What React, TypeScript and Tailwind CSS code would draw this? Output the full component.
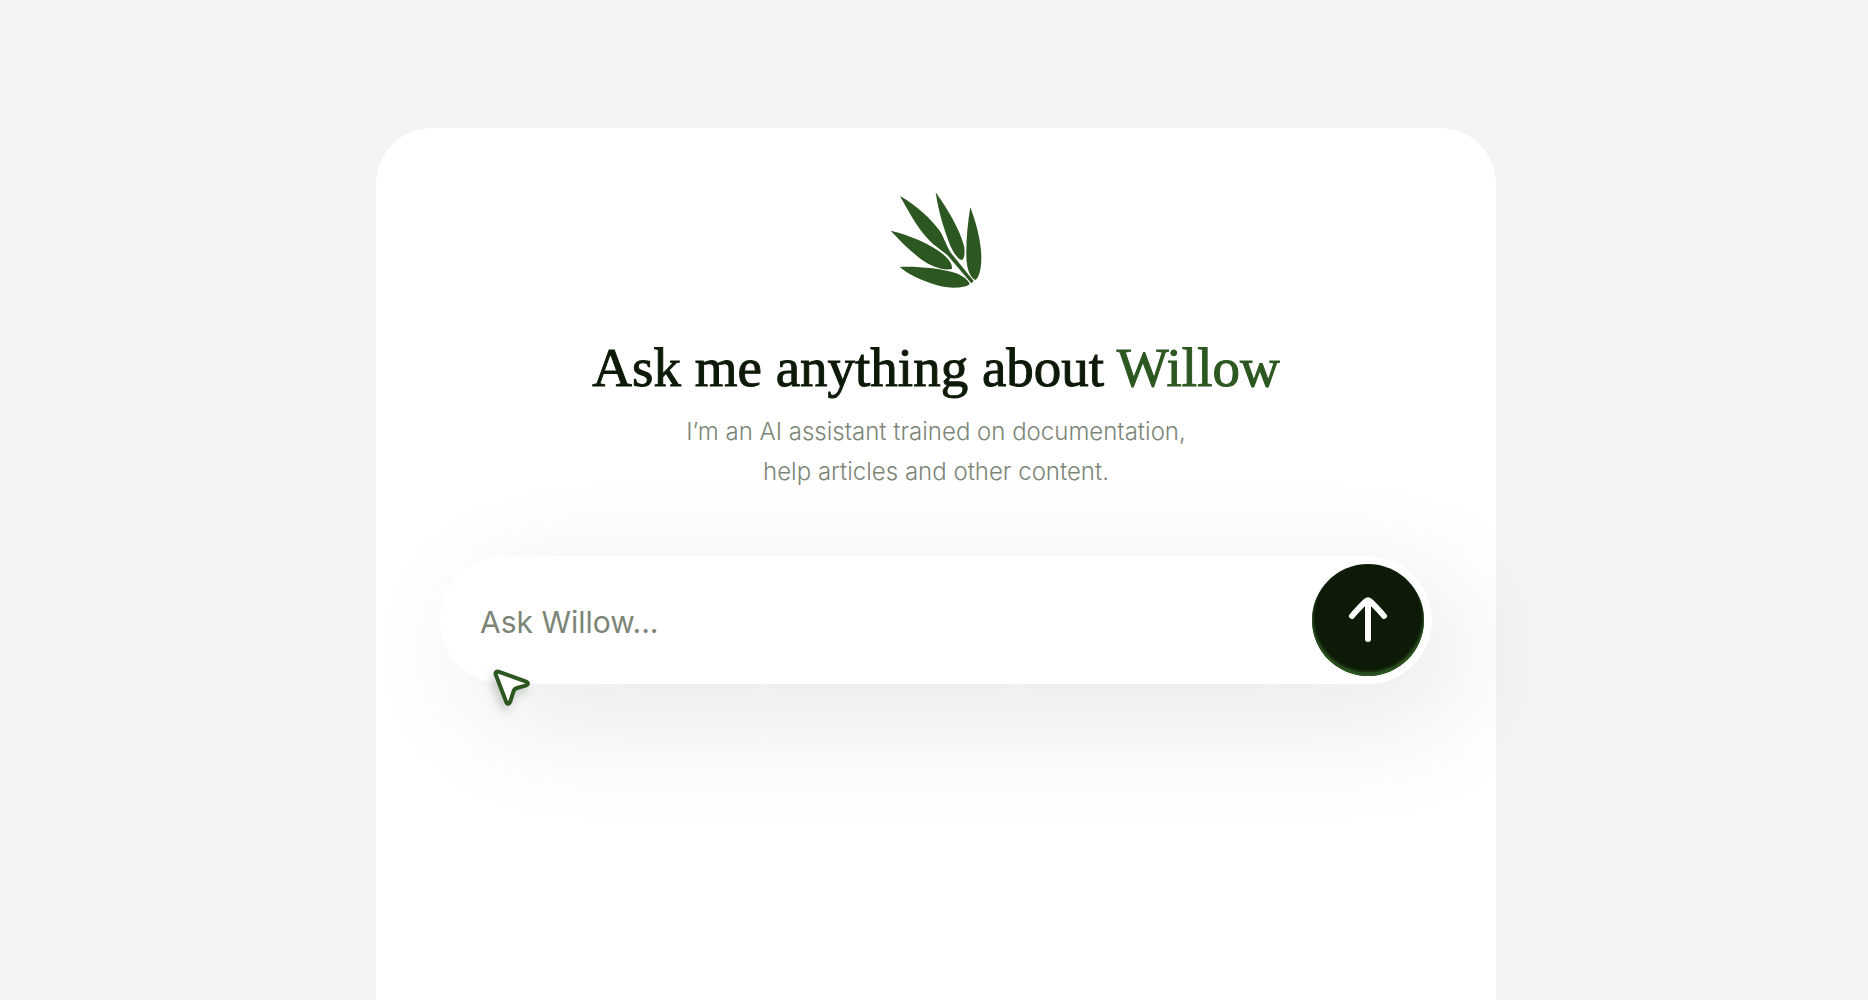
import { useState } from "react";

function LeafLogo() {
  return (
    <svg
      viewBox="55 66 288 288"
      className="h-24 w-24 fill-[#2d5720]"
      role="img"
      aria-label="Willow"
    >
      <path d="M91 78C138 104 184 146 211 184C223 203 229 226 244 249L312 333L305 340L238 261C222 242 199 232 180 212C140 172 115 120 91 78Z" />
      <path d="M198 67C232 115 271 178 284 232C286 250 284 266 277 270C264 268 250 247 239 220C223 178 206 124 198 67Z" />
      <path d="M302 112C318 155 336 215 335 270C334 300 327 324 317 330C303 324 291 300 290 260C289 210 294 160 302 112Z" />
      <path d="M63 182C118 195 184 222 220 253C238 268 248 281 247 297C222 303 183 289 152 266C115 238 88 208 63 182Z" />
      <path d="M90 291C130 288 215 294 260 310C284 320 298 333 300 343C285 355 240 357 200 345C155 332 115 312 90 291Z" />
    </svg>
  );
}

function ArrowUp() {
  return (
    <svg
      viewBox="0 0 48 48"
      className="h-12 w-12 fill-none stroke-white"
      strokeWidth="6"
      strokeLinecap="round"
      strokeLinejoin="round"
      aria-hidden="true"
    >
      <path d="M24 43V6" />
      <path d="M8 20C12 15 17 10 21 6C23 4 25 4 27 6C31 10 36 15 40 20" />
    </svg>
  );
}

function Cursor() {
  return (
    <svg
      viewBox="0 0 40 40"
      className="pointer-events-none absolute top-28 left-12 h-10 w-10 overflow-visible fill-white stroke-[#2d5720] drop-shadow-[-3px_5px_5px_rgba(13,26,8,0.2)]"
      strokeWidth="4"
      strokeLinejoin="round"
      aria-hidden="true"
    >
      <path d="M7.7 6.5C7.1 4.3 8.3 3.2 10.5 3.7L37.5 13.4C40.7 14.6 40.7 16.4 37.5 17.6L29 20C27 20.6 26 21.6 25.4 23.6L22.4 33.2C21.4 36.4 19.4 36.6 18.1 33.6Z" />
    </svg>
  );
}

function App() {
  const [question, setQuestion] = useState("");

  return (
    <main className="flex min-h-screen flex-col items-center overflow-hidden bg-[#f3f5f2] pt-32 pl-1 font-['Inter',sans-serif]">
      <section className="flex w-3/5 min-w-[1120px] grow flex-col items-center rounded-t-[56px] bg-white px-16 pt-16">
        <LeafLogo />

        <h1 className="mt-12 text-[55px] leading-[64px] whitespace-nowrap text-[#0d1a08] font-['Liberation_Serif',serif] [-webkit-text-stroke:1px_currentColor]">
          Ask me anything about <span className="text-[#2d5720]">Willow</span>
        </h1>

        <p className="mt-3 text-center text-2xl leading-10 font-light text-[#7c8578]">
          I’m an AI assistant trained on documentation,
          <br />
          help articles and other content.
        </p>

        <form
          onSubmit={(event) => event.preventDefault()}
          className="relative mt-16 flex h-32 w-full items-center rounded-full bg-white p-2 pl-10 shadow-[32px_32px_120px_rgba(20,50,15,0.11)]"
        >
          <input
            type="text"
            value={question}
            onChange={(event) => setQuestion(event.target.value)}
            placeholder="Ask Willow..."
            aria-label="Ask Willow"
            className="min-w-0 grow bg-transparent pt-1 text-[30px] leading-10 text-[#0d1a08] outline-none placeholder:text-[#7c8578]"
          />
          <button
            type="submit"
            aria-label="Send"
            className="flex h-28 w-28 shrink-0 items-center justify-center rounded-full bg-[#0d1a08] shadow-[inset_0_-3px_3px_1px_#2d5720]"
          >
            <ArrowUp />
          </button>
          <Cursor />
        </form>
      </section>
    </main>
  );
}

export default App;
